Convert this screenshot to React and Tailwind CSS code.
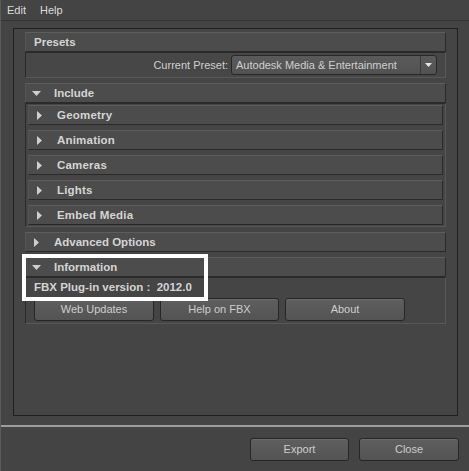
import React from "react";

const font = { fontFamily: '"Liberation Sans", Arial, sans-serif' };

function TriDown({ className = "" }) {
  return (
    <svg width="9" height="5" viewBox="0 0 9 5" className={className}>
      <polygon points="0,0 9,0 4.5,5" fill="#cfcfcf" />
    </svg>
  );
}

function TriRight({ className = "" }) {
  return (
    <svg width="5" height="9" viewBox="0 0 5 9" className={className}>
      <polygon points="0,0 5,4.5 0,9" fill="#cfcfcf" />
    </svg>
  );
}

function Header({ label, open, arrow = true }) {
  return (
    <div className="h-[20px] flex items-center bg-[#4c4c4c] border-t border-t-[#5d5d5d] border-b border-b-[#2a2a2a] border-r border-r-[#2a2a2a] border-l border-l-[#545454] pl-[6px]">
      {arrow ? (open ? <TriDown /> : <TriRight className="ml-[2px]" />) : null}
      <span
        className={`${arrow ? (open ? "ml-[13px]" : "ml-[15px]") : "ml-[2px]"} pt-[2px] text-[11.5px] font-bold text-[#d4d4d4] leading-none`}
      >
        {label}
      </span>
    </div>
  );
}

function SubHeader({ label }) {
  return (
    <div className="h-[20px] flex items-center bg-[#4c4c4c] border-t border-t-[#5d5d5d] border-b border-b-[#2a2a2a] border-r border-r-[#2a2a2a] border-l border-l-[#545454] pl-[8px]">
      <TriRight />
      <span className="ml-[15px] pt-[2px] text-[11.5px] font-bold tracking-[0.2px] text-[#d4d4d4] leading-none">
        {label}
      </span>
    </div>
  );
}

function Btn({ children, className = "" }) {
  return (
    <button
      className={`h-[23px] rounded-[3px] border border-[#262626] bg-gradient-to-b from-[#5e5e5e] to-[#545454] shadow-[inset_0_1px_0_#6a6a6a] text-[11px] text-[#cdcdcd] flex items-center justify-center ${className}`}
    >
      {children}
    </button>
  );
}

export default function App() {
  return (
    <div
      style={font}
      className="w-[469px] h-[471px] bg-[#444444] relative overflow-hidden border-l border-l-[#5a5a5a]"
    >
      {/* menu bar */}
      <div className="h-[21px] flex items-center gap-[14px] pl-[6px] border-b border-b-[#353535] text-[11px] text-[#dcdcdc]">
        <span>Edit</span>
        <span>Help</span>
      </div>

      {/* main panel */}
      <div className="ml-[12px] mt-[7px] w-[445px] h-[388px] border border-[#1f1f1f] bg-[#454545] pl-[11px] pr-[11px] pt-[3px]">
        <div className="flex flex-col">
          {/* Presets */}
          <Header label="Presets" arrow={false} />
          <div className="h-[26px] flex items-center justify-end bg-[#474747] border-t border-t-[#2a2a2a] border-l border-l-[#2a2a2a] border-b border-b-[#585858] border-r border-r-[#585858] pr-[8px]">
            <span className="text-[11px] text-[#cfcfcf] mr-[3px] pt-[1px]">Current Preset:</span>
            <div className="w-[206px] h-[20px] rounded-[3px] border border-[#282828] bg-gradient-to-b from-[#5a5a5a] to-[#525252] flex items-center">
              <span className="flex-1 pl-[4px] pt-[1px] text-[11px] text-[#cfcfcf] whitespace-nowrap">
                Autodesk Media &amp; Entertainment
              </span>
              <div className="w-[16px] h-full border-l border-l-[#3a3a3a] flex items-center justify-center">
                <svg width="7" height="4" viewBox="0 0 7 4">
                  <polygon points="0,0 7,0 3.5,4" fill="#e6e6e6" />
                </svg>
              </div>
            </div>
          </div>

          {/* Include */}
          <div className="mt-[5px]">
            <Header label="Include" open />
          </div>
          <div className="h-[124px] border-t border-t-[#2a2a2a] border-l border-l-[#2a2a2a] border-b border-b-[#585858] border-r border-r-[#585858] pl-[2px] pr-[2px] pt-[1px] flex flex-col gap-[5px]">
            <SubHeader label="Geometry" />
            <SubHeader label="Animation" />
            <SubHeader label="Cameras" />
            <SubHeader label="Lights" />
            <SubHeader label="Embed Media" />
          </div>

          {/* Advanced */}
          <div className="mt-[5px]">
            <Header label="Advanced Options" />
          </div>

          {/* Information */}
          <div className="mt-[5px]">
            <Header label="Information" open />
          </div>
          <div className="h-[47px] border-t border-t-[#2a2a2a] border-l border-l-[#2a2a2a] border-b border-b-[#585858] border-r border-r-[#585858] pl-[8px] pt-[3px]">
            <div className="h-[14px] flex items-center text-[11.5px] font-bold text-[#d4d4d4] whitespace-pre">
              FBX Plug-in version :  2012.0
            </div>
            <div className="mt-[3px] flex gap-[6px]">
              <Btn className="w-[120px]">Web Updates</Btn>
              <Btn className="w-[119px]">Help on FBX</Btn>
              <Btn className="w-[120px]">About</Btn>
            </div>
          </div>
        </div>
      </div>

      {/* separator */}
      <div className="mt-[9px] h-[2px] bg-[#9c9c9c]" />

      {/* bottom buttons */}
      <div className="mt-[11px] flex justify-end gap-[10px] pr-[10px]">
        <Btn className="w-[99px]">Export</Btn>
        <Btn className="w-[100px]">Close</Btn>
      </div>

      {/* highlight annotation */}
      <div className="absolute left-[21px] top-[254px] w-[186px] h-[47px] border-[4px] border-white pointer-events-none" />
    </div>
  );
}
